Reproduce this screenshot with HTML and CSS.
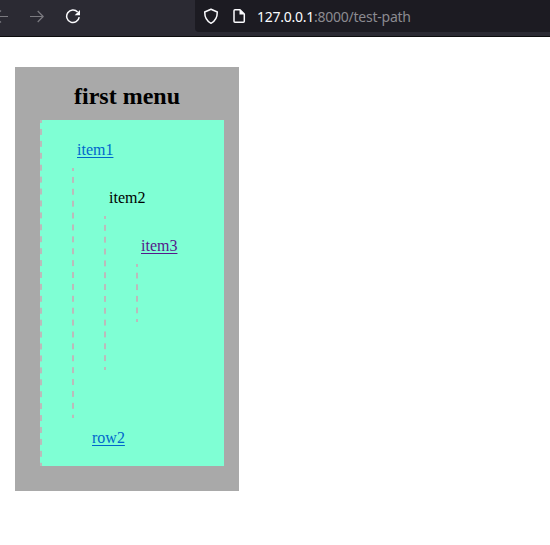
FILE: index.html
```
<!DOCTYPE html>
<html lang="en">
<head>
<meta charset="utf-8">
<title>first menu</title>
<link rel="stylesheet" href="styles.css">
</head>
<body>
<header class="toolbar">
  <nav class="controls">
    <svg class="muted" width="16" height="16" viewBox="0 0 16 16"><path d="M15 8.5H1.5M8 2.5l-6 6 6 6"/></svg>
    <svg class="muted" width="16" height="16" viewBox="0 0 16 16"><path d="M1 8.5h13M8.7 3l5.5 5.5L8.7 14"/></svg>
    <svg width="16" height="16" viewBox="0 0 16 16"><path d="M12.6 4A6.3 6.3 0 1 0 14.2 9.2"/><path class="solid" d="M15 2v5.2H9.7z"/></svg>
  </nav>
  <div class="address">
    <svg width="16" height="16" viewBox="0 0 16 16"><path d="M8 1.2L14.3 4C14.3 8.8 12.5 13 8 15.3C3.5 13 1.7 8.8 1.7 4Z"/></svg>
    <svg width="16" height="16" viewBox="0 0 16 16"><path d="M4 1.8h5l4.3 4.2v7.2a1 1 0 0 1-1 1H4a1 1 0 0 1-1-1V2.8a1 1 0 0 1 1-1z"/><path class="solid" d="M8.5 1.5l5 5h-5z"/></svg>
    <span class="url"><b>127.0.0.1</b>:8000/test-path</span>
  </div>
</header>
<main class="menu">
  <h2>first menu</h2>
  <ul class="tree">
    <li><a class="label" href="#item1">item1</a>
      <ul>
        <li><span class="label">item2</span>
          <ul>
            <li><a class="label seen" href="#item3">item3</a>
              <ul class="empty"></ul>
            </li>
          </ul>
        </li>
      </ul>
    </li>
    <li class="row"><a href="#row2">row2</a></li>
  </ul>
</main>
</body>
</html>
```
FILE: styles.css
```
body {
  margin: 0;
  background: #fff;
  color: #000;
  font: 16px/18px "Liberation Serif", "Times New Roman", serif;
  overflow: hidden;
}
.toolbar {
  box-sizing: border-box;
  height: 37px;
  display: flex;
  background: #2b2a33;
  border-bottom: 1px solid #0c0c0d;
}
.controls {
  width: 195px;
  display: flex;
  gap: 20px;
  padding-top: 8px;
  box-sizing: border-box;
}
.controls svg:first-child { margin-left: -7px; }
svg {
  flex: none;
  fill: none;
  stroke: #fbfbfe;
  stroke-width: 1.5;
  stroke-linejoin: round;
}
svg.muted { stroke: #7b7a80; stroke-width: 1.2; }
.solid { fill: #fbfbfe; stroke: none; }
.address {
  flex: 1;
  height: 32px;
  box-sizing: border-box;
  display: flex;
  gap: 12px;
  padding: 8px 0 0 8px;
  background: #1c1b22;
  border-radius: 0 0 0 4px;
}
.url {
  margin-left: -2px;
  font: 14px/18px "Noto Sans", "Open Sans", sans-serif;
  letter-spacing: -0.25px;
  color: #8b8a90;
  white-space: nowrap;
}
.url b { font-weight: 400; color: #fbfbfe; }
.menu {
  box-sizing: border-box;
  width: 224px;
  height: 424px;
  margin: 30px 0 0 15px;
  padding: 15px 15px 25px 25px;
  background: #a9a9a9;
}
h2 {
  margin: 0 0 10px;
  width: 174px;
  font-size: 24px;
  line-height: 28px;
  text-align: center;
}
ul {
  list-style: none;
  margin: 0 0 48px 32px;
  padding: 0;
  background: linear-gradient(#bbb 25%, transparent 25% 75%, #bbb 75%) 0 0 / 2px 12px no-repeat round;
}
.tree { margin: 0; background-color: #7fffd4; }
ul ul { display: flow-root; }
li { display: flow-root; }
.tree > li:first-child > ul { margin-bottom: 0; }
.empty { height: 58px; }
.label {
  display: block;
  box-sizing: border-box;
  height: 48px;
  padding: 21px 0 0 37px;
}
.row { height: 48px; padding: 11px 0 0 52px; box-sizing: border-box; }
a { color: #0066cc; text-underline-offset: 2px; text-decoration-thickness: 1px; }
a.seen { color: #551a8b; }
```
